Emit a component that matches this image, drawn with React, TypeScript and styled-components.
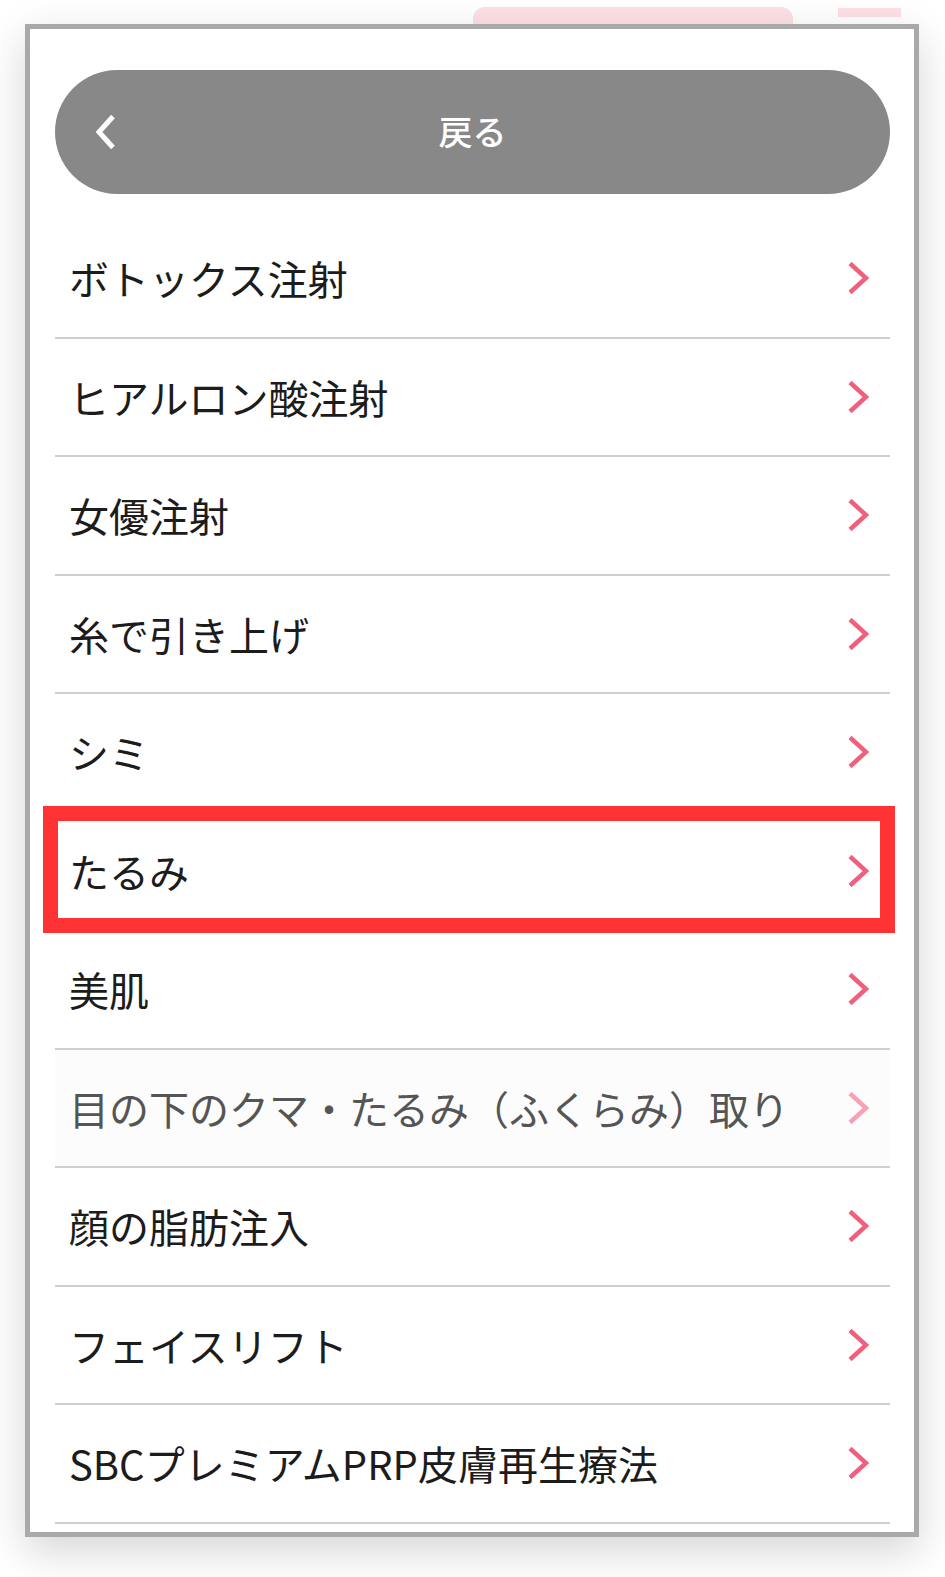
import React from "react";
import styled, { createGlobalStyle } from "styled-components";

const GlobalStyle = createGlobalStyle`
  html, body { margin: 0; padding: 0; background: #ffffff; }
  body {
    font-family: "Noto Sans CJK JP", "Noto Sans", sans-serif;
    -webkit-font-smoothing: antialiased;
  }
  * { box-sizing: border-box; }
`;

const Page = styled.div`
  position: relative;
  width: 945px;
  height: 1577px;
  overflow: hidden;
  background: #ffffff;
`;

const Header = styled.header`
  display: flex;
  justify-content: flex-end;
  align-items: flex-start;
  gap: 45px;
  padding: 7px 44px 0 0;
`;

const HeaderPill = styled.div`
  width: 320px;
  height: 50px;
  border-radius: 12px;
  background: #fde0e5;
  color: #ffffff;
  font-size: 22px;
  font-weight: 700;
  display: flex;
  align-items: center;
  justify-content: center;
  padding-top: 12px;
  letter-spacing: 2px;
`;

const HeaderBar = styled.div`
  width: 63px;
  height: 9px;
  margin-top: 1px;
  background: #fde0e5;
`;

const Modal = styled.div`
  position: absolute;
  left: 25px;
  top: 24px;
  width: 894px;
  height: 1513px;
  border: 5px solid #a9a9a9;
  background: #ffffff;
  box-shadow: 0 14px 40px rgba(0, 0, 0, 0.17);
  padding: 41px 24px 0 25px;
  overflow: hidden;
`;

const BackButton = styled.button`
  width: 100%;
  height: 124px;
  border: none;
  border-radius: 62px;
  background: #888888;
  color: #ffffff;
  display: grid;
  grid-template-columns: 1fr auto 1fr;
  align-items: center;
  padding: 0;
  font-family: "Noto Sans CJK JP", "Noto Sans", sans-serif;
  font-size: 34px;
  font-weight: 500;
  cursor: pointer;
`;

const BackIcon = styled.span`
  justify-self: start;
  padding-left: 40px;
  display: flex;
`;

const BackLabel = styled.span`
  line-height: 1;
  margin-top: -2px;
`;

const List = styled.ul`
  list-style: none;
  margin: 26px 0 0;
  padding: 0;
`;

const Row = styled.li<{ $dim?: boolean }>`
  position: relative;
  height: 118.5px;
  border-bottom: 2px solid #cfcfcf;
  background: ${(p) => (p.$dim ? "#fcfcfc" : "#ffffff")};
  display: flex;
  align-items: center;
  justify-content: space-between;
  padding: 0 21px 0 14px;
  color: ${(p) => (p.$dim ? "#555555" : "#1c1c1c")};
  font-size: 40px;
  font-weight: 400;
  line-height: 1;
`;

const RowLabel = styled.span`
  white-space: nowrap;
`;

const Highlight = styled.div`
  position: absolute;
  z-index: 2;
  top: -7px;
  bottom: -4px;
  left: -12px;
  right: -5px;
  border: 15px solid #ff3333;
  pointer-events: none;
`;

const Chevron: React.FC<{ color: string }> = ({ color }) => (
  <svg width="22" height="34" viewBox="0 0 22 34" aria-hidden="true">
    <polyline
      points="3,2.5 19,17 3,31.5"
      fill="none"
      stroke={color}
      strokeWidth="4.5"
      strokeLinejoin="miter"
    />
  </svg>
);

const BackChevron = () => (
  <svg width="22" height="36" viewBox="0 0 22 36" aria-hidden="true">
    <polyline
      points="18,2.5 4,18 18,33.5"
      fill="none"
      stroke="#ffffff"
      strokeWidth="5"
      strokeLinejoin="miter"
    />
  </svg>
);

type Item = { label: string; dim?: boolean; highlight?: boolean };

const items: Item[] = [
  { label: "ボトックス注射" },
  { label: "ヒアルロン酸注射" },
  { label: "女優注射" },
  { label: "糸で引き上げ" },
  { label: "シミ" },
  { label: "たるみ", highlight: true },
  { label: "美肌" },
  { label: "目の下のクマ・たるみ（ふくらみ）取り", dim: true },
  { label: "顔の脂肪注入" },
  { label: "フェイスリフト" },
  { label: "SBCプレミアムPRP皮膚再生療法" },
];

export default function App() {
  return (
    <>
      <GlobalStyle />
      <Page>
        <Header>
          <HeaderPill>お悩み・症状で探す</HeaderPill>
          <HeaderBar />
        </Header>
        <Modal>
          <BackButton type="button">
            <BackIcon>
              <BackChevron />
            </BackIcon>
            <BackLabel>戻る</BackLabel>
            <span />
          </BackButton>
          <List>
            {items.map((it) => (
              <Row key={it.label} $dim={it.dim}>
                <RowLabel>{it.label}</RowLabel>
                <Chevron color={it.dim ? "#f7a2b2" : "#f0607c"} />
                {it.highlight && <Highlight />}
              </Row>
            ))}
          </List>
        </Modal>
      </Page>
    </>
  );
}
